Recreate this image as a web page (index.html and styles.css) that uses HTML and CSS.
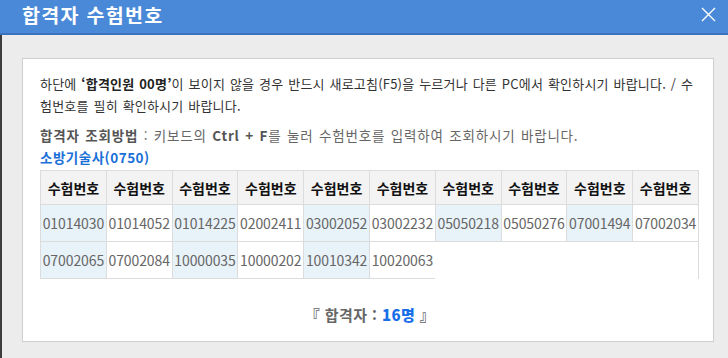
FILE: index.html
```html
<!DOCTYPE html>
<html lang="ko">
<head>
<meta charset="utf-8">
<title>합격자 수험번호</title>
<link rel="stylesheet" href="styles.css">
</head>
<body>
<div class="modal">
  <div class="modal-head">
    <h1 class="modal-title">합격자 수험번호</h1>
    <button class="close" aria-label="닫기">
      <svg width="15" height="15" viewBox="0 0 15 15"><path d="M1 1L14 14M14 1L1 14" stroke="#fff" stroke-width="1.4" fill="none"/></svg>
    </button>
  </div>
  <div class="modal-body">
    <div class="panel">
      <p class="notice">하단에 <b>‘합격인원 00명’</b>이 보이지 않을 경우 반드시 새로고침(F5)을 누르거나 다른 PC에서 확인하시기 바랍니다. / 수험번호를 필히 확인하시기 바랍니다.</p>
      <p class="howto"><b class="howto-label">합격자 조회방법</b> : 키보드의 <b>Ctrl + F</b>를 눌러 수험번호를 입력하여 조회하시기 바랍니다.</p>
      <p class="exam">소방기술사(0750)</p>
      <div class="grid">
        <div class="th">수험번호</div><div class="th">수험번호</div><div class="th">수험번호</div><div class="th">수험번호</div><div class="th">수험번호</div>
        <div class="th">수험번호</div><div class="th">수험번호</div><div class="th">수험번호</div><div class="th">수험번호</div><div class="th">수험번호</div>
        <div class="td odd">01014030</div><div class="td">01014052</div><div class="td odd">01014225</div><div class="td">02002411</div><div class="td odd">03002052</div>
        <div class="td">03002232</div><div class="td odd">05050218</div><div class="td">05050276</div><div class="td odd">07001494</div><div class="td">07002034</div>
        <div class="td odd">07002065</div><div class="td">07002084</div><div class="td odd">10000035</div><div class="td">10000202</div><div class="td odd">10010342</div>
        <div class="td">10020063</div>
      </div>
      <p class="total">『 합격자 : <b class="count">16명</b> 』</p>
    </div>
  </div>
</div>
</body>
</html>
```
FILE: styles.css
```css
* { box-sizing: border-box; }
html, body { margin: 0; padding: 0; }
body {
  width: 728px;
  height: 358px;
  overflow: hidden;
  background: #ececec;
  font-family: "Noto Sans CJK KR", "Noto Sans", sans-serif;
}
.modal { width: 728px; height: 358px; display: flex; flex-direction: column; }
.modal-head {
  height: 35px;
  background: #4a89d8;
  border-bottom: 2px solid #3c71bd;
  display: flex;
  align-items: center;
  justify-content: space-between;
  padding: 0 12px 0 22px;
  flex: none;
}
.modal-title {
  margin: 0;
  color: #fff;
  font-size: 19.5px;
  font-weight: 700;
  line-height: 28px;
  letter-spacing: 1.3px;
  position: relative;
  top: -2px;
}
.close {
  border: 0;
  background: none;
  padding: 0;
  width: 15px;
  height: 15px;
  display: block;
  position: relative;
  top: -2px;
}
.close svg { display: block; }
.modal-body {
  flex: 1;
  border-left: 2px solid #3d3d3d;
  padding: 23px 14px 0 20px;
}
.panel {
  background: #fff;
  border: 1px solid #cfcfcf;
  height: 284px;
  padding: 14px 13px 0 17px;
}
.notice {
  margin: 0;
  font-size: 13px;
  line-height: 22px;
  color: #333;
  letter-spacing: 0.2px;
  word-spacing: 1px;
  word-break: break-all;
}
.notice b { font-weight: 700; color: #222; }
.howto {
  margin: 7px 0 0;
  font-size: 13.5px;
  line-height: 22px;
  color: #666;
  letter-spacing: 0.8px;
  word-spacing: 1px;
}
.howto-label { font-weight: 700; color: #666; }
.howto b { color: #555; }
.exam {
  margin: 0;
  font-size: 13.5px;
  line-height: 22px;
  font-weight: 700;
  color: #1a6fd8;
  letter-spacing: 0.5px;
}
.grid {
  margin-top: 2px;
  display: grid;
  grid-template-columns: repeat(10, 1fr);
  grid-template-rows: 34px 37px 37px;
  border-top: 1px solid #dcdcdc;
  border-right: 1px solid #dcdcdc;
  width: 659px;
}
.th, .td {
  border-left: 1px solid #dcdcdc;
  border-bottom: 1px solid #dcdcdc;
  display: flex;
  align-items: center;
  justify-content: center;
  white-space: nowrap;
}
.th {
  background: #f3f3f3;
  font-size: 14px;
  font-weight: 700;
  color: #111;
}
.td {
  font-size: 14px;
  color: #666;
  background: #fff;
  letter-spacing: -0.1px;
}
.td.odd { background: #e8f2f9; }
.total {
  margin: 24px 0 0;
  text-align: center;
  font-size: 15px;
  line-height: 24px;
  font-weight: 700;
  color: #666;
  letter-spacing: 0.4px;
}
.count { color: #1a6fe8; }
```
